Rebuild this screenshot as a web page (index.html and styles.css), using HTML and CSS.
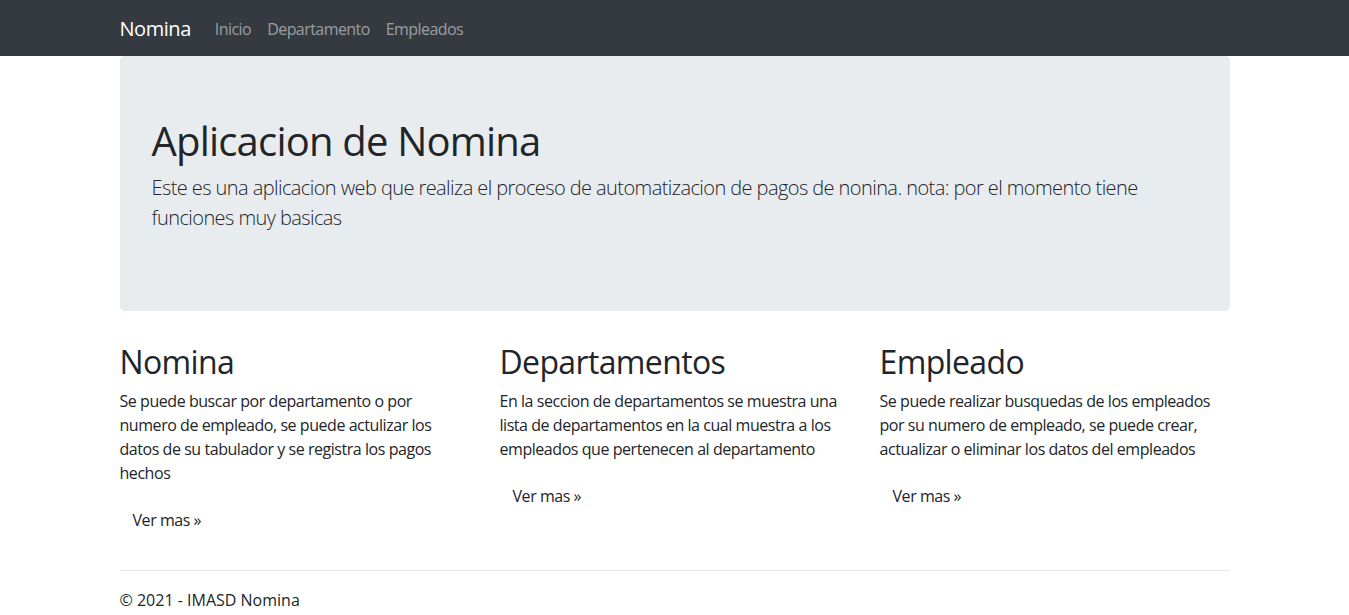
FILE: index.html
```html
<!DOCTYPE html>
<html lang="es">
<head>
<meta charset="utf-8">
<title>Nomina</title>
<link rel="stylesheet" href="styles.css">
</head>
<body>
<header>
  <nav class="navbar">
    <div class="container nav-inner">
      <a class="brand" href="#">Nomina</a>
      <ul class="nav-links">
        <li><a href="#">Inicio</a></li>
        <li><a href="#">Departamento</a></li>
        <li><a href="#">Empleados</a></li>
      </ul>
    </div>
  </nav>
</header>
<div class="container">
  <div class="jumbotron">
    <h1>Aplicacion de Nomina</h1>
    <p class="lead">Este es una aplicacion web que realiza el proceso de automatizacion de pagos de nonina. nota: por el momento tiene funciones muy basicas</p>
  </div>
  <div class="row">
    <div class="col">
      <h2>Nomina</h2>
      <p>Se puede buscar por departamento o por numero de empleado, se puede actulizar los datos de su tabulador y se registra los pagos hechos</p>
      <p><a class="btn" href="#">Ver mas &raquo;</a></p>
    </div>
    <div class="col">
      <h2>Departamentos</h2>
      <p>En la seccion de departamentos se muestra una lista de departamentos en la cual muestra a los empleados que pertenecen al departamento</p>
      <p><a class="btn" href="#">Ver mas &raquo;</a></p>
    </div>
    <div class="col">
      <h2>Empleado</h2>
      <p>Se puede realizar busquedas de los empleados por su numero de empleado, se puede crear, actualizar o eliminar los datos del empleados</p>
      <p><a class="btn" href="#">Ver mas &raquo;</a></p>
    </div>
  </div>
  <hr class="divider">
  <footer class="footer">
    <p>&copy; 2021 - IMASD Nomina</p>
  </footer>
</div>
</body>
</html>
```
FILE: styles.css
```css
* { box-sizing: border-box; }
html, body { margin: 0; }
body {
  font-family: "Open Sans", "Noto Sans", sans-serif;
  font-size: 16px;
  line-height: 1.5;
  letter-spacing: -0.028em;
  color: #212529;
  background: #fff;
}
a { text-decoration: none; }
.container {
  max-width: 1140px;
  margin: 0 auto;
  padding: 0 15px;
}
.navbar {
  background: #343a40;
  padding: 8px 0;
}
.nav-inner {
  display: flex;
  align-items: center;
}
.brand {
  color: #fff;
  font-size: 20px;
  line-height: 30px;
  padding: 6px 0 4px;
  margin-right: 16px;
}
.nav-links {
  display: flex;
  list-style: none;
  margin: 0;
  padding: 0;
}
.nav-links a {
  display: block;
  padding: 9px 8px 7px;
  color: rgba(255,255,255,.5);
  line-height: 24px;
  letter-spacing: -0.035em;
}
.jumbotron {
  background: #e9ecef;
  border-radius: 4.8px;
  padding: 61px 32px 62px;
  margin-bottom: 32px;
}
.jumbotron h1 {
  margin: 0 0 8px;
  font-size: 40px;
  font-weight: 400;
  line-height: 1.2;
  letter-spacing: -0.02em;
}
.lead {
  margin: 0 0 16px;
  font-size: 20px;
  font-weight: 300;
  line-height: 30px;
  letter-spacing: -0.029em;
}
.row {
  display: grid;
  grid-template-columns: repeat(3, 1fr);
  margin: 0 -15px;
}
.col { padding: 0 15px; }
.col h2 {
  margin: 0 0 8px;
  font-size: 32px;
  font-weight: 400;
  line-height: 1.2;
  letter-spacing: -0.02em;
}
.col p { margin: 0 0 16px; }
.btn {
  display: inline-block;
  padding: 6px 12px;
  border: 1px solid transparent;
  color: #212529;
  line-height: 24px;
}
.divider {
  margin: 15px 0 17px;
  border: 0;
  border-top: 1px solid rgba(0,0,0,.1);
}
.footer p { margin: 0; letter-spacing: 0; }
```
